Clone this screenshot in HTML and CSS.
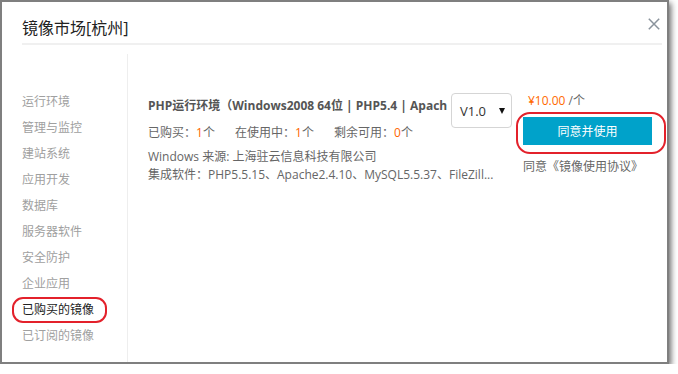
FILE: index.html
```html
<!DOCTYPE html>
<html lang="zh-CN">
<head>
<meta charset="utf-8">
<title>镜像市场</title>
<link rel="stylesheet" href="styles.css">
</head>
<body>
<div class="dialog">
  <div class="dialog-head">
    <h1 class="dialog-title">镜像市场[杭州]</h1>
    <span class="close" aria-label="关闭">
      <svg width="12" height="12" viewBox="0 0 12 12"><path d="M0.8 0.8 L11.2 11.2 M11.2 0.8 L0.8 11.2" stroke="#8a939c" stroke-width="1.5" fill="none"/></svg>
    </span>
  </div>
  <div class="dialog-body">
    <ul class="side-nav">
      <li>运行环境</li>
      <li>管理与监控</li>
      <li>建站系统</li>
      <li>应用开发</li>
      <li>数据库</li>
      <li>服务器软件</li>
      <li>安全防护</li>
      <li>企业应用</li>
      <li class="active"><span class="mark">已购买的镜像</span></li>
      <li>已订阅的镜像</li>
    </ul>
    <div class="main">
      <div class="item">
        <div class="item-info">
          <div class="item-head">
            <div class="item-title">PHP运行环境（Windows2008 64位 | PHP5.4 | Apach</div>
            <div class="version">V1.0<span class="caret"></span></div>
          </div>
          <div class="stats">
            <span class="stat">已购买：<em>1</em>个</span>
            <span class="stat">在使用中：<em>1</em>个</span>
            <span class="stat">剩余可用：<em>0</em>个</span>
          </div>
          <div class="line source">Windows 来源: 上海驻云信息科技有限公司</div>
          <div class="line">集成软件：PHP5.5.15、Apache2.4.10、MySQL5.5.37、FileZill...</div>
        </div>
        <div class="item-buy">
          <div class="price"><span class="amount">¥10.00</span> /个</div>
          <div class="btn-mark"><button class="btn">同意并使用</button></div>
          <div class="agree">同意《镜像使用协议》</div>
        </div>
      </div>
    </div>
  </div>
</div>
</body>
</html>
```
FILE: styles.css
```css
html, body {
  margin: 0;
  padding: 0;
  background: #fff;
}
body {
  font-family: "Open Sans", "Noto Sans CJK SC", sans-serif;
  font-size: 12px;
  color: #666;
}
.dialog {
  width: 665px;
  height: 360px;
  border: 2px solid #7f7f7f;
  background: #fff;
  box-shadow: 2px 3px 6px rgba(0, 0, 0, 0.6);
  display: flex;
  flex-direction: column;
}
.dialog-head {
  margin: 0 5px 0 20px;
  padding: 16px 0 5px;
  border-bottom: 2px solid #f0f0f0;
  display: flex;
  align-items: flex-start;
  justify-content: space-between;
}
.dialog-title {
  margin: 0;
  font-size: 16px;
  line-height: 20px;
  font-weight: normal;
  color: #222;
}
.close {
  display: block;
  width: 12px;
  height: 12px;
  margin-top: 0;
  margin-right: 2px;
}
.close svg { display: block; }
.dialog-body {
  flex: 1;
  margin-top: 9px;
  display: flex;
}
.side-nav {
  list-style: none;
  margin: 0;
  padding: 35px 0 0 20px;
  width: 105px;
  border-right: 1px solid #eee;
}
.side-nav li {
  line-height: 26px;
  height: 26px;
  color: #a0a0a0;
  white-space: nowrap;
}
.side-nav li.active { color: #222; }
.mark {
  display: inline-block;
  margin-left: -10px;
  padding: 0 11px 0 8px;
  line-height: 22px;
  border: 2px solid #e3212b;
  border-radius: 11px;
}
.main {
  flex: 1;
  padding: 38px 0 0 20px;
}
.item {
  display: flex;
  align-items: flex-start;
}
.item-info {
  width: 364px;
  padding-top: 4px;
}
.item-head {
  display: flex;
  align-items: flex-start;
  height: 20px;
}
.item-title {
  width: 303px;
  overflow: hidden;
  white-space: nowrap;
  line-height: 20px;
  font-weight: bold;
  color: #555;
}
.version {
  box-sizing: border-box;
  width: 61px;
  height: 35px;
  margin-top: -3px;
  border: 1px solid #d5d5d5;
  border-radius: 4px;
  background: #fff;
  display: flex;
  align-items: center;
  padding: 1px 0 0 8px;
  font-size: 13px;
  color: #333;
}
.caret {
  margin-left: 13px;
  width: 0;
  height: 0;
  border-left: 3.5px solid transparent;
  border-right: 3.5px solid transparent;
  border-top: 6px solid #111;
}
.stats {
  margin-top: 8px;
  line-height: 18px;
  display: flex;
  white-space: nowrap;
}
.stat:nth-child(1) { width: 87px; }
.stat:nth-child(2) { width: 99px; }
.stats em {
  font-style: normal;
  color: #ff6600;
}
.line {
  line-height: 18px;
  white-space: nowrap;
}
.source { margin-top: 6px; }
.item-buy {
  margin-left: 11px;
}
.price {
  padding-left: 5px;
  line-height: 18px;
  color: #666;
}
.amount { color: #ff6a00; }
.btn-mark {
  width: 135px;
  margin: 2px 0 0 -7px;
  padding: 3px 6px 7px 5px;
  border: 2px solid #e3212b;
  border-radius: 14px;
}
.btn {
  display: block;
  width: 129px;
  height: 28px;
  border: 0;
  padding: 0;
  background: #00a2ca;
  color: #fff;
  font-family: inherit;
  font-size: 12px;
}
.agree {
  margin-top: 4px;
  line-height: 18px;
  color: #666;
}
```
